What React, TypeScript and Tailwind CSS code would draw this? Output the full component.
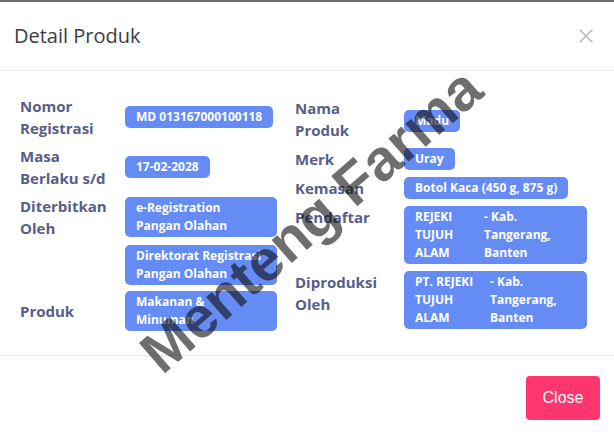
import React from 'react';

const labelCls = "text-[15px] font-bold leading-[22px] text-[#585d8a]";
const badgeCls = "rounded-[5px] bg-[#658cf5] px-[11px] py-[2px] text-[12px] font-bold leading-[18px] text-white";

const Label = ({ lines }: { lines: string[] }) => (
  <div className={labelCls}>
    {lines.map((l) => (
      <div key={l} className="whitespace-nowrap">{l}</div>
    ))}
  </div>
);

const Badge = ({ lines, className = '' }: { lines: string[]; className?: string }) => (
  <div className={`${badgeCls} ${className}`}>
    {lines.map((l) => (
      <div key={l} className="whitespace-nowrap">{l}</div>
    ))}
  </div>
);

const AddressBadge = ({ name, place, nameW }: { name: string[]; place: string[]; nameW: string }) => (
  <div className={`${badgeCls} flex w-[183px]`}>
    <div className={nameW}>
      {name.map((l) => <div key={l} className="whitespace-nowrap">{l}</div>)}
    </div>
    <div>
      {place.map((l) => <div key={l} className="whitespace-nowrap">{l}</div>)}
    </div>
  </div>
);

export default function App() {
  return (
    <div className="relative h-[434px] w-[614px] overflow-hidden bg-white" style={{ fontFamily: '"Open Sans", "Noto Sans", sans-serif' }}>
      <div className="h-[2px] bg-[#6c6c6c]" />

      {/* header */}
      <div className="flex h-[69px] items-center justify-between border-b border-[#e9ecef] pl-[14px] pr-[21px]">
        <h5 className="text-[20px] font-normal text-[#3a3b45]">Detail Produk</h5>
        <svg width="14" height="14" viewBox="0 0 14 14" className="text-[#b4b8c0]">
          <path d="M1 1 L13 13 M13 1 L1 13" stroke="currentColor" strokeWidth="1.5" strokeLinecap="round" />
        </svg>
      </div>

      {/* body */}
      <div className="flex h-[285px] gap-[18px] border-b border-[#e9ecef] pl-[20px] pt-[24px]">
        <div className="flex w-[257px] flex-col gap-[6px]">
          <div className="flex items-center">
            <div className="w-[105px]"><Label lines={['Nomor', 'Registrasi']} /></div>
            <Badge lines={['MD 013167000100118']} />
          </div>
          <div className="flex items-center">
            <div className="w-[105px]"><Label lines={['Masa', 'Berlaku s/d']} /></div>
            <Badge lines={['17-02-2028']} />
          </div>
          <div className="flex items-center">
            <div className="w-[105px]"><Label lines={['Diterbitkan', 'Oleh']} /></div>
            <Badge lines={['e-Registration', 'Pangan Olahan']} className="w-[152px]" />
          </div>
          <div className="flex items-center">
            <div className="w-[105px]" />
            <Badge lines={['Direktorat Registrasi', 'Pangan Olahan']} className="w-[152px]" />
          </div>
          <div className="flex items-center">
            <div className="w-[105px]"><Label lines={['Produk']} /></div>
            <Badge lines={['Makanan &', 'Minuman']} className="w-[152px]" />
          </div>
        </div>

        <div className="mt-[2px] flex flex-col gap-[7px]">
          <div className="flex items-center">
            <div className="w-[109px]"><Label lines={['Nama', 'Produk']} /></div>
            <Badge lines={['Madu']} className="mt-[3px]" />
          </div>
          <div className="flex items-center">
            <div className="w-[109px]"><Label lines={['Merk']} /></div>
            <Badge lines={['Uray']} />
          </div>
          <div className="flex items-center">
            <div className="w-[109px]"><Label lines={['Kemasan']} /></div>
            <Badge lines={['Botol Kaca (450 g, 875 g)']} />
          </div>
          <div className="flex items-start">
            <div className="w-[109px]"><Label lines={['Pendaftar']} /></div>
            <AddressBadge name={['REJEKI', 'TUJUH', 'ALAM']} place={['- Kab.', 'Tangerang,', 'Banten']} nameW="w-[69px]" />
          </div>
          <div className="flex items-start">
            <div className="w-[109px]"><Label lines={['Diproduksi', 'Oleh']} /></div>
            <AddressBadge name={['PT. REJEKI', 'TUJUH', 'ALAM']} place={['- Kab.', 'Tangerang,', 'Banten']} nameW="w-[75px]" />
          </div>
        </div>
      </div>

      {/* footer */}
      <div className="flex justify-end pr-[14px] pt-[20px]">
        <button className="h-[44px] w-[74px] rounded-[4px] bg-[#fd3670] text-[16px] text-white" style={{ fontFamily: '"Liberation Sans", Arial, sans-serif' }}>
          Close
        </button>
      </div>

      {/* watermark */}
      <div
        className="pointer-events-none absolute left-[311px] top-[220px] whitespace-nowrap text-[58px] font-bold leading-none text-[rgba(13,13,13,0.6)]"
        style={{ transform: 'translate(-50%, -50%) rotate(-41deg)', fontFamily: '"Liberation Sans", Arial, sans-serif' }}
      >
        Menteng Farma
      </div>
    </div>
  );
}
